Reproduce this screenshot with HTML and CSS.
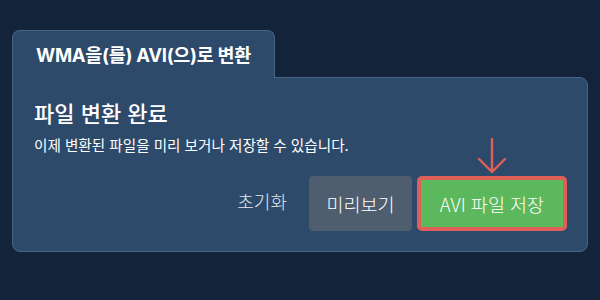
FILE: index.html
```html
<!DOCTYPE html>
<html lang="ko">
<head>
<meta charset="utf-8">
<link rel="stylesheet" href="styles.css">
</head>
<body>
<div class="wrap">
  <div class="tab">WMA을(를) AVI(으)로 변환</div>
  <div class="panel">
    <h1 class="heading">파일 변환 완료</h1>
    <p class="desc">이제 변환된 파일을 미리 보거나 저장할 수 있습니다.</p>
    <div class="actions">
      <span class="reset">초기화</span>
      <button class="btn btn-gray">미리보기</button>
      <div class="save-wrap">
        <svg class="arrow" width="30" height="36" viewBox="0 0 30 36">
          <path d="M15 1 V34 M2 21 L15 34 L28 21" fill="none" stroke="#e05f58" stroke-width="2.4" stroke-linecap="round" stroke-linejoin="round"/>
        </svg>
        <button class="btn btn-green">AVI 파일 저장</button>
      </div>
    </div>
  </div>
</div>
</body>
</html>
```
FILE: styles.css
```css
html, body {
  margin: 0;
  padding: 0;
  background: #12233a;
  width: 600px;
  height: 300px;
  overflow: hidden;
}
.wrap {
  padding: 30px 0 0 12px;
  font-family: "Noto Sans CJK KR", "Noto Sans", sans-serif;
  color: #ffffff;
}
.tab {
  display: inline-flex;
  align-items: center;
  box-sizing: border-box;
  height: 48px;
  padding: 0 23px 2px 23px;
  background: #2d4a6b;
  border: 1px solid #4a6384;
  border-bottom: none;
  border-radius: 8px 8px 0 0;
  position: relative;
  z-index: 1;
  margin-bottom: -1px;
  font-family: "Inter", "Noto Sans CJK KR", sans-serif;
  font-weight: 700;
  font-size: 18.5px;
  letter-spacing: -0.3px;
}
.panel {
  box-sizing: border-box;
  width: 576px;
  height: 175px;
  background: #2d4a6b;
  border: 1px solid #4a6384;
  border-radius: 0 8px 8px 8px;
  padding: 19px 20px 20px 21px;
  display: flex;
  flex-direction: column;
}
.heading {
  margin: 0;
  font-size: 22px;
  font-weight: 500;
  line-height: 30px;
  letter-spacing: 0;
}
.desc {
  margin: 8px 0 0 0;
  font-size: 14.6px;
  line-height: 20px;
  letter-spacing: 0;
}
.actions {
  margin-top: auto;
  display: flex;
  justify-content: flex-end;
  align-items: center;
}
.reset {
  font-weight: 300;
  font-size: 18px;
  color: #e3e8ee;
  margin-right: 22px;
  padding-bottom: 6px;
}
.btn {
  font-family: "Noto Sans CJK KR", sans-serif;
  font-weight: 300;
  font-size: 18.5px;
  color: #ffffff;
  border: none;
  box-sizing: border-box;
  height: 55px;
  padding: 0;
}
.btn-gray {
  background: #4e5e6f;
  border-radius: 4px;
  width: 103px;
  margin-right: 5px;
}
.save-wrap {
  position: relative;
}
.btn-green {
  background: #5cb85c;
  border: 4px solid #e05f58;
  border-radius: 5px;
  width: 150px;
  display: block;
}
.arrow {
  position: absolute;
  left: 60px;
  top: -38px;
}
```
